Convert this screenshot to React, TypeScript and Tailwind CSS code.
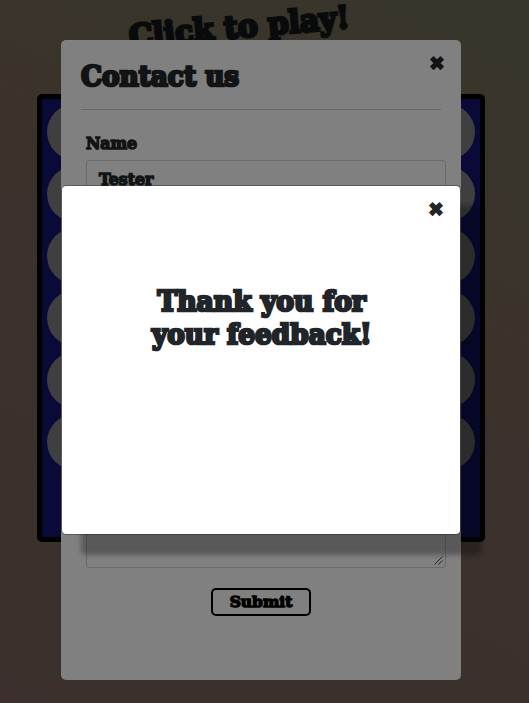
import type { ReactNode } from "react";

const slab = "inline-block whitespace-nowrap font-bold leading-none font-['DejaVu_Serif',serif]";
const small = "origin-left scale-x-[0.98] text-[16px] text-[#111314] [-webkit-text-stroke:1.5px_#111314]";

function CloseButton({ className }: { className: string }) {
  return (
    <button className={`absolute leading-none font-['DejaVu_Sans',sans-serif] [-webkit-text-stroke:1px_currentColor] ${className}`}>✖</button>
  );
}

function Board() {
  return (
    <div className="ml-[37px] mt-[94px] grid h-[448px] w-[448px] grid-cols-7 content-start gap-1.5 rounded-[5px] border-[5px] border-black bg-[#0a0a38] p-[5px]">
      {Array.from({ length: 42 }, (_, i) => (
        <div key={i} className="h-14 w-14 rounded-full bg-[#3f3f3f]" />
      ))}
    </div>
  );
}

function Label({ children }: { children: ReactNode }) {
  return (
    <label className="flex h-[24px] items-start">
      <span className={`${slab} ${small}`}>{children}</span>
    </label>
  );
}

function ContactDialog() {
  return (
    <section className="absolute left-[61px] top-10 flex h-[640px] w-[400px] flex-col rounded-[5px] bg-[#808080] px-5">
      <CloseButton className="left-[368px] top-[14px] text-[19px] text-[#111314]" />
      <header className="h-[70px] shrink-0 border-b border-[#676869] pt-[23px]">
        <h2 className={`${slab} origin-left scale-x-[0.94] text-[28px] text-[#111314] [-webkit-text-stroke:2.7px_#111314]`}>Contact us</h2>
      </header>
      <div className="ml-[5px] mt-[26px] flex w-[360px] flex-col">
        <Label>Name</Label>
        <div className="flex h-[38px] items-center rounded-[4px] border border-[#67696b] px-3 pt-0.5">
          <span className={`${slab} ${small}`}>Tester</span>
        </div>
        <div className="relative mt-[40px] h-[330px] rounded-[4px] border border-[#67696b]">
          <svg className="absolute bottom-0.5 right-0.5" width="9" height="9" viewBox="0 0 9 9" stroke="#1c1c1c" strokeWidth="0.9">
            <path d="M0.5 8.5 8.5.5M4.5 8.5l4-4" />
          </svg>
        </div>
      </div>
      <button className="mt-5 flex h-7 w-[100px] items-center justify-center self-center rounded-[5px] border-2 border-black">
        <span className={`${slab} text-[15.5px] text-black [-webkit-text-stroke:1.4px_#000]`}>Submit</span>
      </button>
    </section>
  );
}

function ThanksDialog() {
  return (
    <section className="absolute left-[61px] top-[185px] flex h-[350px] w-[400px] flex-col items-center rounded-[5px] border border-black/30 bg-white bg-clip-padding pt-[102px] shadow-[20px_20px_5px_rgba(0,0,0,0.3)]">
      <CloseButton className="left-[366px] top-[14px] text-[19px] text-[#212529]" />
      <h2 className="flex flex-col items-center pl-px text-[#212529]">
        <span className={`${slab} h-[33px] scale-x-[0.95] text-[28px] [-webkit-text-stroke:2.7px_#212529]`}>Thank you for</span>
        <span className={`${slab} h-[33px] scale-x-[0.94] text-[28px] [-webkit-text-stroke:2.7px_#212529]`}>your feedback!</span>
      </h2>
    </section>
  );
}

export default function App() {
  return (
    <main className="relative flow-root h-[703px] w-[529px] overflow-hidden bg-[linear-gradient(26deg,#3c2f2e_0%,#3a302b_6%,#3b312d_48%,#3c322a_62%,#3a342a_72%,#38362b_100%)]">
      <h1 className={`${slab} absolute left-[129px] top-[21px] origin-left -rotate-[5deg] scale-x-[0.96] text-[31px] text-[#090a0b] [-webkit-text-stroke:3px_#090a0b]`}>Click to play!</h1>
      <Board />
      <ContactDialog />
      <ThanksDialog />
    </main>
  );
}
